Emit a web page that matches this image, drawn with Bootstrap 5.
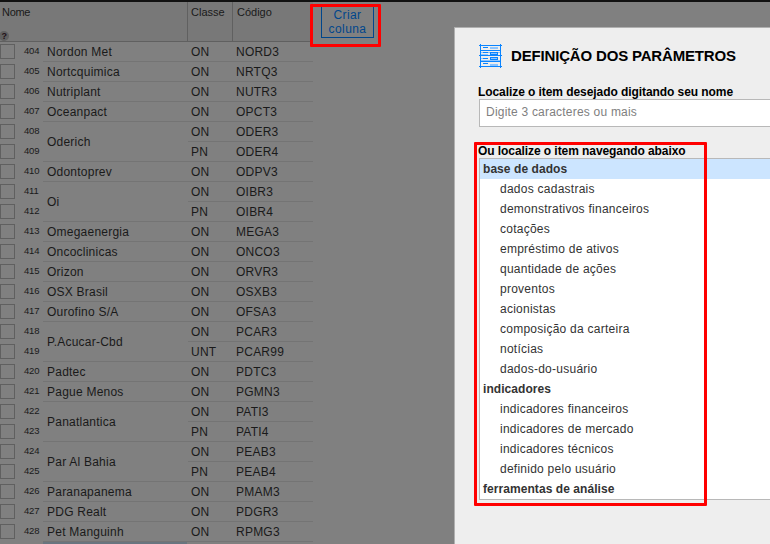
<!DOCTYPE html>
<html lang="pt-BR">
<head>
<meta charset="utf-8">
<title>Definição dos parâmetros</title>
<link href="https://cdn.jsdelivr.net/npm/bootstrap@5.3.0/dist/css/bootstrap.min.css" rel="stylesheet">
<style>
body{width:770px;height:544px;background:#808080;font-family:"Liberation Sans",Arial,sans-serif;font-size:12px;line-height:20px;color:#1a1a1a}
.backdrop-area{border-top:2px solid #111}
.stocks{width:313px;table-layout:fixed;border-collapse:separate;border-spacing:0;letter-spacing:.23px}
.stocks th{height:40px;background:#787878;border-bottom:1px solid #606060;border-right:1px solid #606060;font-weight:400;font-size:11px;line-height:14px;letter-spacing:0;vertical-align:top;padding:3px 0 0 3px;color:#1a1a1a}
.stocks th:last-child{border-right:0;padding-left:4px}
.stocks th:first-child{padding-left:2px;position:relative;letter-spacing:-.3px}
.stocks td{height:20px;line-height:18px;padding:1px 0 0 3px;border-bottom:1px solid #747474;white-space:nowrap}
.stocks td.pick{padding:0;border:0}
.stocks td.company{vertical-align:middle;padding-left:4px}
.tick{width:15px;height:15px;border:1px solid #606060;flex:none;margin-bottom:1px}
.order-no{font-size:9.5px;line-height:16px;margin:0 0 3px 9px;letter-spacing:-.2px}
.help-dot{position:absolute;left:-1px;bottom:0;width:10px;height:10px;border-radius:50%;background:#606060;font-size:9px;line-height:11px;font-weight:700;text-align:center;color:#221018}
.next-row{width:144px;height:2px;margin-left:43px;background:#69757f}
.mark-box{position:absolute;border:3px solid #f00;border-radius:1px;z-index:5;pointer-events:none}
.mark-button{left:310px;top:4px;width:71px;height:43px}
.mark-list{left:474px;top:142px;width:233px;height:364px}
.create-col{width:53px;height:32px;margin:4px 0 0 8px;border:1px solid #00468c;border-radius:0;color:#00468c;font-size:12px;line-height:14px;letter-spacing:.4px;padding:0 0 1px}
.dialog-panel{position:absolute;left:454px;top:27px;width:330px;height:530px;background:#eee;border:1px solid #b0b0b0;padding:16px 0 0 24px;color:#000}
.dialog-panel h1{font-size:15px;line-height:24px;font-weight:700;margin:-2px 0 0 8px;letter-spacing:-.17px}
.field-label{font-size:12px;line-height:14px;font-weight:700;margin:16px 0 0 -1px;letter-spacing:-.07px;white-space:nowrap}
.search-box{height:28px;border:1px solid #b8b8b8;border-radius:0;font-size:12px;letter-spacing:.21px;padding:0 0 2px 6px}
.search-box::placeholder{color:#808080}
.search-box + .field-label{margin-top:17px}
.tree{border:1px solid #b8b8b8;background:#fff;color:#333}
.tree div{height:20px;line-height:20px;padding-left:20px;letter-spacing:.25px}
.tree div.group{font-weight:700;padding-left:3px;letter-spacing:.06px}
.tree div.chosen{background:#cce5ff}
</style>
</head>
<body class="overflow-hidden position-relative">
<main class="backdrop-area d-flex align-items-start">
  <div>
    <table class="stocks">
      <colgroup><col style="width:43px"><col style="width:145px"><col style="width:45px"><col style="width:80px"></colgroup>
      <thead><tr><th colspan="2">Nome<span class="help-dot">?</span></th><th>Classe</th><th>Código</th></tr></thead>
      <tbody id="rows"></tbody>
    </table>
    <div class="next-row"></div>
  </div>
  <button class="btn create-col">Criar coluna</button>
</main>
<section class="dialog-panel">
  <div class="d-flex align-items-center">
    <svg width="24" height="25" viewBox="0 0 24 25" fill="none" stroke="#0a84ff" shape-rendering="crispEdges">
      <path stroke="#8cc5ff" stroke-width="2" d="M11 4h8M11 21h8"/>
      <path stroke="#8cc5ff" d="M2 8.5h20M2 16.5h20M1 10.5h8M1 14.5h8M11 9.5h8M11 14.5h8"/>
      <path d="M1.5 0v24M21.5 0v24M0 1.5h23M1 6.5h21M0 11.5h23M1 17.5h21M0 22.5h23M4 3.5h5M4 8.5h5M4 14.5h5M4 19.5h5M11.5 8.5h7v2h-7zM11.5 13.5h7v2h-7z"/>
    </svg>
    <h1>DEFINIÇÃO DOS PARÂMETROS</h1>
  </div>
  <label class="field-label d-block" for="q">Localize o item desejado digitando seu nome</label>
  <input class="form-control search-box" id="q" placeholder="Digite 3 caracteres ou mais">
  <div class="field-label">Ou localize o item navegando abaixo</div>
  <div class="tree">
    <div class="group chosen">base de dados</div>
    <div>dados cadastrais</div>
    <div>demonstrativos financeiros</div>
    <div>cotações</div>
    <div>empréstimo de ativos</div>
    <div>quantidade de ações</div>
    <div>proventos</div>
    <div>acionistas</div>
    <div>composição da carteira</div>
    <div>notícias</div>
    <div>dados-do-usuário</div>
    <div class="group">indicadores</div>
    <div>indicadores financeiros</div>
    <div>indicadores de mercado</div>
    <div>indicadores técnicos</div>
    <div>definido pelo usuário</div>
    <div class="group">ferramentas de análise</div>
  </div>
</section>
<div class="mark-box mark-button"></div>
<div class="mark-box mark-list"></div>
<script src="https://cdn.jsdelivr.net/npm/bootstrap@5.3.0/dist/js/bootstrap.bundle.min.js"></script>
<script>
const companies = [
  ["Nordon Met","ON NORD3"],["Nortcquimica","ON NRTQ3"],["Nutriplant","ON NUTR3"],["Oceanpact","ON OPCT3"],
  ["Oderich","ON ODER3","PN ODER4"],["Odontoprev","ON ODPV3"],["Oi","ON OIBR3","PN OIBR4"],
  ["Omegaenergia","ON MEGA3"],["Oncoclinicas","ON ONCO3"],["Orizon","ON ORVR3"],["OSX Brasil","ON OSXB3"],
  ["Ourofino S/A","ON OFSA3"],["P.Acucar-Cbd","ON PCAR3","UNT PCAR99"],["Padtec","ON PDTC3"],
  ["Pague Menos","ON PGMN3"],["Panatlantica","ON PATI3","PN PATI4"],["Par Al Bahia","ON PEAB3","PN PEAB4"],
  ["Paranapanema","ON PMAM3"],["PDG Realt","ON PDGR3"],["Pet Manguinh","ON RPMG3"]
];
let no = 404, html = "";
for (const [name, ...papers] of companies) papers.forEach((p, i) => {
  const [kind, code] = p.split(" ");
  html += `<tr><td class="pick"><div class="d-flex align-items-center"><span class="tick"></span><span class="order-no">${no++}</span></div></td>` +
    (i ? "" : `<td class="company" rowspan="${papers.length}">${name}</td>`) + `<td>${kind}</td><td>${code}</td></tr>`;
});
document.getElementById("rows").innerHTML = html;
</script>
</body>
</html>
